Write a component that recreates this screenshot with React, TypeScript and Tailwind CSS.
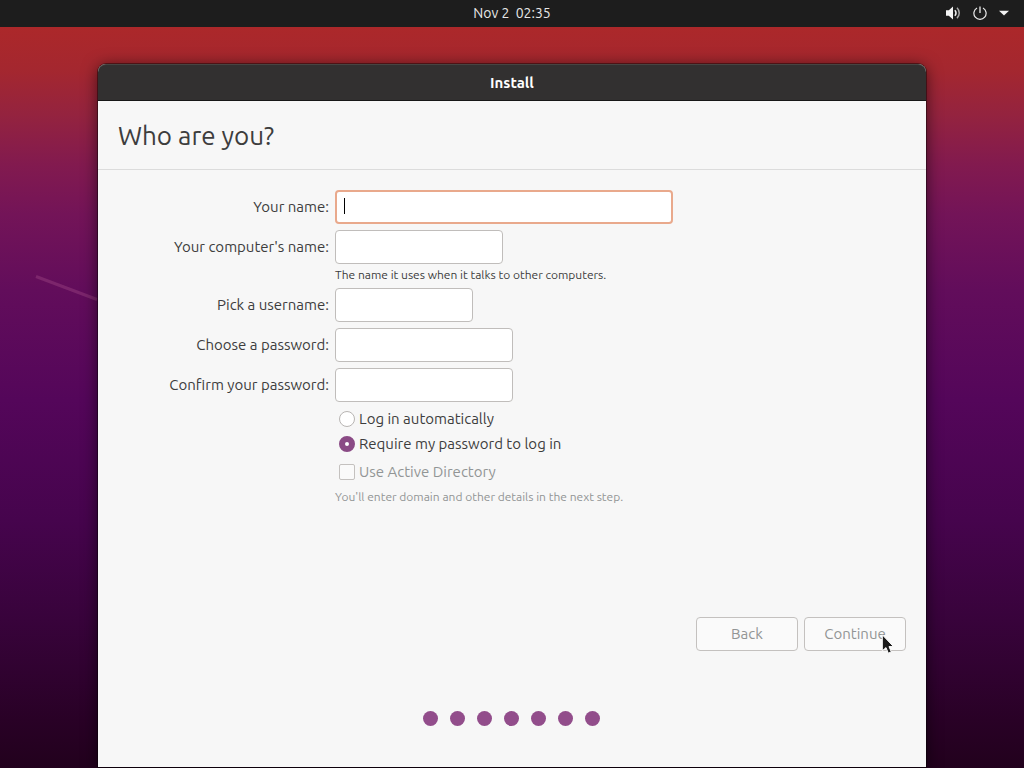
import type { ReactNode } from "react";

const inputClass =
  "block h-[34px] max-w-full rounded border border-[#c0bdbb] bg-white px-2 text-[15px] outline-none";

const radioClass =
  "size-4 appearance-none rounded-full border border-[#b8b5b3] bg-white checked:border-[6px] checked:border-[#8a4a85]";

const buttonClass =
  "h-[34px] w-[102px] rounded border border-[#c4c1bf] bg-[#fafafa] text-[15px] text-[#929595]";

function Field({ id, label, children }: { id: string; label: string; children: ReactNode }) {
  return (
    <div className="grid grid-cols-[231px_1fr] items-center gap-x-1.5">
      <label htmlFor={id} className="text-right">
        {label}
      </label>
      {children}
    </div>
  );
}

function TopBar() {
  return (
    <header className="grid h-[27px] grid-cols-3 items-center bg-[#1d1d1d] pb-px text-sm leading-none text-[#e8e8e8]">
      <span />
      <time className="whitespace-pre text-center">Nov 2  02:35</time>
      <div className="flex items-center justify-end gap-3 pr-[15px]">
        <svg width="16" height="16" viewBox="0 0 16 16" fill="none" aria-hidden="true">
          <path d="M1 5.200h2.800L8 1.500v13l-4.200-3.700H1z" fill="#f4f4f4" />
          <path d="M9.800 5.200c1.600 1.600 1.600 4 0 5.600" stroke="#f2f2f2" strokeWidth="1.600" />
          <path d="M12 2.800c3 3 3 7.400 0 10.400" stroke="#a9a9a9" strokeWidth="1.500" />
        </svg>
        <svg width="14" height="16" viewBox="0 0 14 16" fill="none" stroke="#ededed" aria-hidden="true">
          <path d="M4 3A6.100 6.100 0 1 0 10 3" strokeWidth="1.200" />
          <path d="M7 1.500v6.500" strokeWidth="1.300" />
        </svg>
        <svg width="10" height="6" viewBox="0 0 10 6" aria-hidden="true">
          <path d="M0 .8h10L5 5.600z" fill="#f2f2f2" />
        </svg>
      </div>
    </header>
  );
}

function Cursor() {
  return (
    <svg
      className="pointer-events-none absolute top-[17px] left-[77px]"
      width="14"
      height="21"
      viewBox="0 0 14 21"
      aria-hidden="true"
    >
      <path
        d="M1.300 .8v16l3.700-3.200 2.300 5.600 3-1.300-2.300-5.300h4.500z"
        fill="#1c1c1c"
        stroke="#ffffff"
        strokeWidth="1"
      />
    </svg>
  );
}

export default function App() {
  return (
    <div className="relative flex min-h-screen flex-col bg-[#24011c] bg-[linear-gradient(180deg,#ac282a_27px,#a4272f_70px,#94233f_115px,#821a4f_165px,#731458_215px,#620d5b_290px,#54065a_400px,#46044d_520px,#38033b_620px,#290126_720px,#22011d_768px)] font-['Ubuntu','Noto_Sans',sans-serif] text-[15px] leading-5 text-[#3d3d3d]">
      <TopBar />
      <svg className="absolute top-[274px] left-[34px]" width="64" height="28" viewBox="0 0 64 28" aria-hidden="true">
        <path d="M2 2.500 63 25.500" stroke="#a34b86" strokeOpacity=".4" strokeWidth="3" />
      </svg>
      <main className="relative mx-[98px] mt-[37px] mb-px flex flex-1 flex-col rounded-t-lg bg-[#f7f7f7] shadow-[0_0_0_1px_rgba(0,0,0,0.4),0_2px_16px_rgba(0,0,0,0.6)]">
        <div className="flex h-[37px] items-center justify-center rounded-t-lg border-t border-b border-t-[#464442] border-b-[#181818] bg-[#323030] font-bold text-white">
          Install
        </div>
        <div className="flex h-[69px] items-center border-b border-[#dcdcdc] px-5 pt-0.5">
          <h1 className="text-[26px] leading-8">Who are you?</h1>
        </div>
        <form className="flex flex-1 flex-col" onSubmit={(e) => e.preventDefault()}>
          <div className="flex flex-col gap-1.5 pt-5 pr-5">
            <Field id="name" label="Your name:">
              <div className="relative">
                <input
                  id="name"
                  className="block h-[34px] w-[338px] max-w-full rounded border-2 border-[#e9a98c] bg-white px-2 outline-none"
                />
                <span className="absolute top-2 left-[9px] h-4 w-px bg-black" />
              </div>
            </Field>
            <div>
              <Field id="computer" label="Your computer's name:">
                <input id="computer" className={`${inputClass} w-[168px]`} />
              </Field>
              <p className="h-6 pl-[237px] text-xs leading-[22px]">
                The name it uses when it talks to other computers.
              </p>
              <Field id="username" label="Pick a username:">
                <input id="username" className={`${inputClass} w-[138px]`} />
              </Field>
            </div>
            <Field id="password" label="Choose a password:">
              <input id="password" type="password" className={`${inputClass} w-[178px]`} />
            </Field>
            <Field id="confirm" label="Confirm your password:">
              <input id="confirm" type="password" className={`${inputClass} w-[178px]`} />
            </Field>
          </div>
          <div className="flex flex-col items-start pt-1 pl-[237px]">
            <label className="flex h-[25px] items-center gap-1 pl-1">
              <input type="radio" name="login" className={radioClass} />
              Log in automatically
            </label>
            <label className="flex h-[25px] items-center gap-1 pl-1">
              <input type="radio" name="login" defaultChecked className={radioClass} />
              Require my password to log in
            </label>
            <label className="mt-1 flex h-6 items-center gap-1 pl-1 text-[#929595]">
              <input
                type="checkbox"
                disabled
                className="size-4 appearance-none rounded-xs border border-[#c4c1bf] bg-[#fafafa]"
              />
              Use Active Directory
            </label>
            <p className="text-xs leading-[26px] text-[#929595]">
              You'll enter domain and other details in the next step.
            </p>
          </div>
          <div className="mt-auto flex justify-end gap-1.5 pr-5">
            <button type="button" disabled className={buttonClass}>
              Back
            </button>
            <div className="relative">
              <button type="submit" disabled className={buttonClass}>
                Continue
              </button>
              <Cursor />
            </div>
          </div>
          <div className="flex justify-center gap-3 pt-[60px] pr-0.5 pb-[41px]">
            {[1, 2, 3, 4, 5, 6, 7].map((step) => (
              <span key={step} className="size-[15px] rounded-full bg-[#924d8b]" />
            ))}
          </div>
        </form>
      </main>
    </div>
  );
}
